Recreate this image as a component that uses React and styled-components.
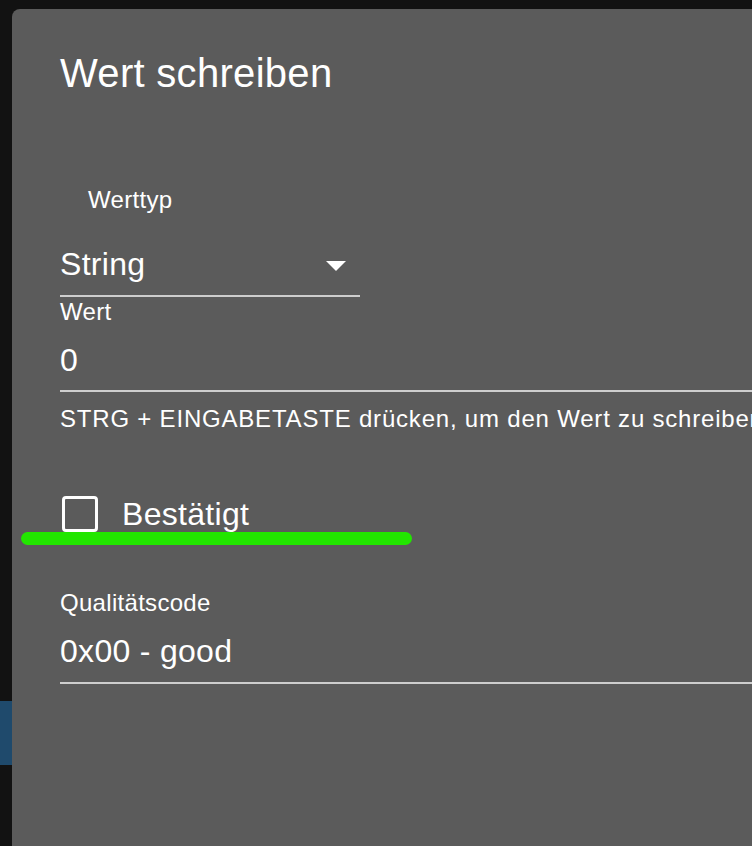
import styled, { createGlobalStyle } from "styled-components";

const GlobalStyle = createGlobalStyle`
  html, body {
    margin: 0;
    padding: 0;
    background: #121212;
    overflow: hidden;
    font-family: "Liberation Sans", Arial, sans-serif;
  }
`;

const Page = styled.div`
  display: flex;
  align-items: flex-start;
  height: 846px;
  overflow: hidden;
`;

const Rail = styled.div`
  width: 12px;
  flex-shrink: 0;
  padding-top: 701px;
`;

const RailBlock = styled.div`
  height: 64px;
  background: #1f4a6c;
`;

const Dialog = styled.div`
  flex-shrink: 0;
  margin-top: 9px;
  width: 900px;
  min-height: 900px;
  background: #5b5b5b;
  border-radius: 8px;
  color: #fff;
`;

const Title = styled.h2`
  margin: 0;
  padding: 32px 48px;
  font-size: 40px;
  font-weight: 400;
  line-height: 64px;
  letter-spacing: 0.3px;
`;

const Content = styled.div`
  display: flex;
  flex-direction: column;
  padding: 0 48px;
`;

const Label = styled.label`
  display: block;
  margin-top: ${(p) => p.$mt}px;
  margin-left: ${(p) => p.$indent || 0}px;
  font-size: 24px;
  line-height: 24px;
  letter-spacing: 0.3px;
  color: #fff;
`;

const Field = styled.div`
  display: flex;
  align-items: center;
  justify-content: space-between;
  width: ${(p) => (p.$width ? `${p.$width}px` : "auto")};
  margin-top: ${(p) => p.$mt}px;
  border-bottom: 2px solid rgba(255, 255, 255, 0.7);
`;

const Value = styled.div`
  padding: ${(p) => p.$pt || 8}px 0 ${(p) => p.$pb}px;
  font-size: 32px;
  line-height: 46px;
  letter-spacing: 0.3px;
  color: #fff;
`;

const ArrowIcon = styled.svg`
  width: 48px;
  height: 48px;
  margin-top: 4px;
  fill: #fff;
`;

const Helper = styled.p`
  margin: 7px 0 0;
  font-size: 24px;
  line-height: 39.84px;
  letter-spacing: 0.8px;
  white-space: nowrap;
  color: #fff;
`;

const CheckRow = styled.div`
  position: relative;
  display: flex;
  align-items: center;
  gap: 24px;
  margin-top: 57px;
  padding-left: 2px;
`;

const Box = styled.span`
  box-sizing: border-box;
  width: 36px;
  height: 36px;
  border: 3px solid #fff;
  border-radius: 4px;
`;

const CheckText = styled.span`
  font-size: 32px;
  line-height: 36px;
  letter-spacing: 0.3px;
`;

const Marker = styled.div`
  position: absolute;
  left: -39px;
  top: 36px;
  width: 391px;
  height: 13px;
  border-radius: 7px;
  background: #22e600;
`;

export default function App() {
  return (
    <>
      <GlobalStyle />
      <Page>
        <Rail>
          <RailBlock />
        </Rail>
        <Dialog>
          <Title>Wert schreiben</Title>
          <Content>
            <Label $mt={51} $indent={28}>Werttyp</Label>
            <Field $mt={19} $width={300}>
              <Value $pt={10} $pb={8}>String</Value>
              <ArrowIcon viewBox="0 0 24 24">
                <path d="M7 10l5 5 5-5z" />
              </ArrowIcon>
            </Field>
            <Label $mt={3}>Wert</Label>
            <Field $mt={5}>
              <Value $pb={7}>0</Value>
            </Field>
            <Helper>STRG + EINGABETASTE drücken, um den Wert zu schreiben</Helper>
            <CheckRow>
              <Box />
              <CheckText>Bestätigt</CheckText>
              <Marker />
            </CheckRow>
            <Label $mt={59}>Qualitätscode</Label>
            <Field $mt={5}>
              <Value $pb={8}>0x00 - good</Value>
            </Field>
          </Content>
        </Dialog>
      </Page>
    </>
  );
}
